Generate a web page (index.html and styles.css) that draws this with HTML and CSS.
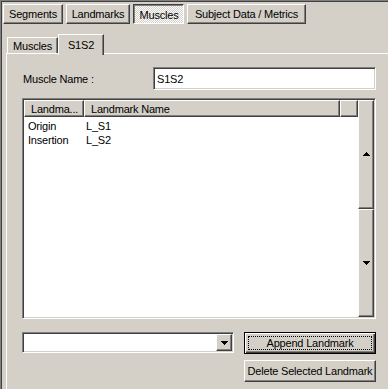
FILE: index.html
```html
<!DOCTYPE html>
<html lang="en">
<head>
    <meta charset="UTF-8">
    <title>Muscles</title>
    <link rel="stylesheet" href="styles.css">
</head>
<body>
    <div class="window">
        <div class="maintabs">
            <div class="mbtn w-seg">Segments</div>
            <div class="mbtn w-land">Landmarks</div>
            <div class="mbtn w-mus pressed">Muscles</div>
            <div class="mbtn w-subj">Subject Data / Metrics</div>
        </div>

        <div class="subtabs">
            <div class="tab w-tab1">Muscles</div>
            <div class="tab w-tab2 active">S1S2</div>
        </div>

        <div class="panel">
            <div class="field-row">
                <label class="field-label">Muscle Name :</label>
                <div class="textbox">S1S2</div>
            </div>

            <div class="listview">
                <div class="list-main">
                    <div class="list-head">
                        <div class="hcell c1">Landma...</div>
                        <div class="hcell c2">Landmark Name</div>
                        <div class="hcell c3"></div>
                    </div>
                    <div class="list-body">
                        <div class="row"><span class="cell-a">Origin</span><span class="cell-b">L_S1</span></div>
                        <div class="row"><span class="cell-a">Insertion</span><span class="cell-b">L_S2</span></div>
                    </div>
                </div>
                <div class="vscroll">
                    <div class="sbtn">
                        <svg width="7" height="4" shape-rendering="crispEdges"><rect x="3" y="0" width="1" height="1"/><rect x="2" y="1" width="3" height="1"/><rect x="1" y="2" width="5" height="1"/><rect x="0" y="3" width="7" height="1"/></svg>
                    </div>
                    <div class="sbtn">
                        <svg width="7" height="4" shape-rendering="crispEdges"><rect x="0" y="0" width="7" height="1"/><rect x="1" y="1" width="5" height="1"/><rect x="2" y="2" width="3" height="1"/><rect x="3" y="3" width="1" height="1"/></svg>
                    </div>
                </div>
            </div>

            <div class="bottom-row">
                <div class="combo">
                    <div class="combo-btn">
                        <svg width="7" height="4" shape-rendering="crispEdges"><rect x="0" y="0" width="7" height="1"/><rect x="1" y="1" width="5" height="1"/><rect x="2" y="2" width="3" height="1"/><rect x="3" y="3" width="1" height="1"/></svg>
                    </div>
                </div>
                <div class="btn-col">
                    <button class="pbtn default"><span class="focus">Append Landmark</span></button>
                    <button class="pbtn">Delete Selected Landmark</button>
                </div>
            </div>
        </div>
    </div>
</body>
</html>
```

FILE: styles.css
```css
body {
    margin: 0;
    background-color: #d4d0c8;
    font-family: "Liberation Sans", Arial, sans-serif;
    font-size: 11px;
    letter-spacing: -0.2px;
    color: #000;
    overflow: hidden;
}

.window {
    width: 388px;
    height: 389px;
    box-sizing: border-box;
    border-top: 1px solid #808080;
    border-left: 1px solid #808080;
    box-shadow: inset 1px 1px #404040;
    padding: 3px 0 0 2px;
}

/* top row of button tabs */
.maintabs {
    display: flex;
    gap: 3px;
    height: 20px;
}

.mbtn {
    box-sizing: border-box;
    height: 20px;
    border: 1px solid;
    border-color: #fff #404040 #404040 #fff;
    box-shadow: inset -1px -1px #808080;
    display: flex;
    align-items: center;
    justify-content: center;
    white-space: nowrap;
}

.mbtn.pressed {
    border-color: #404040 #fff #fff #404040;
    box-shadow: inset 1px 1px #808080;
    background-image: conic-gradient(#fff 25%, #d4d0c8 0 50%, #fff 0 75%, #d4d0c8 0);
    background-size: 2px 2px;
    padding: 1px 0 0 1px;
}

.w-seg { width: 60px; }
.w-land { width: 64px; }
.w-mus { width: 51px; }
.w-subj { width: 119px; }

/* second tab control */
.subtabs {
    display: flex;
    align-items: flex-end;
    height: 19px;
    margin: 10px 0 0 3px;
    padding-left: 1px;
}

.tab {
    box-sizing: border-box;
    height: 16px;
    border: 1px solid;
    border-bottom: none;
    border-color: #fff #404040 transparent #fff;
    box-shadow: inset -1px 0 #808080;
    display: flex;
    align-items: center;
    justify-content: center;
    background-color: #d4d0c8;
}

.tab.active {
    height: 21px;
    margin-bottom: -2px;
    position: relative;
    z-index: 1;
}

.w-tab1 { width: 51px; }
.w-tab2 { width: 46px; }

.panel {
    margin-left: 3px;
    border-top: 1px solid #fff;
    border-left: 1px solid #fff;
    padding: 13px 0 0 15px;
    height: 340px;
}

.field-row {
    display: flex;
    align-items: center;
    height: 23px;
}

.field-label {
    width: 131px;
    padding-left: 1px;
    box-sizing: border-box;
}

.textbox {
    width: 223px;
    height: 23px;
    box-sizing: border-box;
    background-color: #fff;
    border: 1px solid;
    border-color: #808080 #fff #fff #808080;
    box-shadow: inset 1px 1px #404040, inset -1px -1px #d4d0c8;
    padding-left: 3px;
    display: flex;
    align-items: center;
}

/* list view */
.listview {
    margin-top: 8px;
    width: 354px;
    height: 221px;
    box-sizing: border-box;
    border: 1px solid;
    border-color: #808080 #fff #fff #808080;
    box-shadow: inset 1px 1px #404040, inset -1px -1px #d4d0c8;
    padding: 1px;
    display: flex;
    background-color: #fff;
}

.list-main {
    flex: 1;
    display: flex;
    flex-direction: column;
}

.list-head {
    display: flex;
    height: 17px;
}

.hcell {
    box-sizing: border-box;
    height: 17px;
    border: 1px solid;
    border-color: #fff #404040 #404040 #fff;
    box-shadow: inset -1px -1px #808080;
    background-color: #d4d0c8;
    padding-left: 6px;
    display: flex;
    align-items: center;
    white-space: nowrap;
    overflow: hidden;
}

.c1 { width: 60px; }
.c2 { width: 256px; }
.c3 { width: 18px; }

.list-body {
    padding-top: 2px;
}

.row {
    display: flex;
    align-items: center;
    height: 14px;
}

.cell-a {
    width: 58px;
    padding-left: 4px;
    box-sizing: border-box;
}

.cell-b {
    padding-left: 4px;
}

.vscroll {
    width: 16px;
    display: flex;
    flex-direction: column;
    background-color: #d4d0c8;
}

.sbtn {
    flex: 1;
    box-sizing: border-box;
    border: 1px solid;
    border-color: #fff #404040 #404040 #fff;
    box-shadow: inset -1px -1px #808080;
    display: flex;
    align-items: center;
    justify-content: center;
}

/* combo + buttons */
.bottom-row {
    display: flex;
    margin-top: 13px;
}

.combo {
    width: 212px;
    height: 21px;
    box-sizing: border-box;
    background-color: #fff;
    border: 1px solid;
    border-color: #808080 #fff #fff #808080;
    box-shadow: inset 1px 1px #404040, inset -1px -1px #d4d0c8;
    padding: 1px;
    display: flex;
    justify-content: flex-end;
}

.combo-btn {
    width: 16px;
    box-sizing: border-box;
    background-color: #d4d0c8;
    border: 1px solid;
    border-color: #fff #404040 #404040 #fff;
    box-shadow: inset -1px -1px #808080;
    display: flex;
    align-items: center;
    justify-content: center;
}

.btn-col {
    margin-left: 10px;
    width: 132px;
    display: flex;
    flex-direction: column;
    gap: 6px;
}

.pbtn {
    appearance: none;
    font: inherit;
    letter-spacing: inherit;
    color: #000;
    background-color: #d4d0c8;
    height: 22px;
    width: 132px;
    margin: 0;
    padding: 0;
    box-sizing: border-box;
    border: 1px solid;
    border-color: #fff #404040 #404040 #fff;
    box-shadow: inset -1px -1px #808080;
    white-space: nowrap;
    display: flex;
    align-items: center;
    justify-content: center;
}

.pbtn.default {
    border-color: #000;
    box-shadow: inset 1px 1px #fff, inset -1px -1px #404040, inset -2px -2px #808080;
    align-items: stretch;
}

.focus {
    flex: 1;
    margin: 3px;
    border: 1px dotted #000;
    display: flex;
    align-items: center;
    justify-content: center;
}
```
